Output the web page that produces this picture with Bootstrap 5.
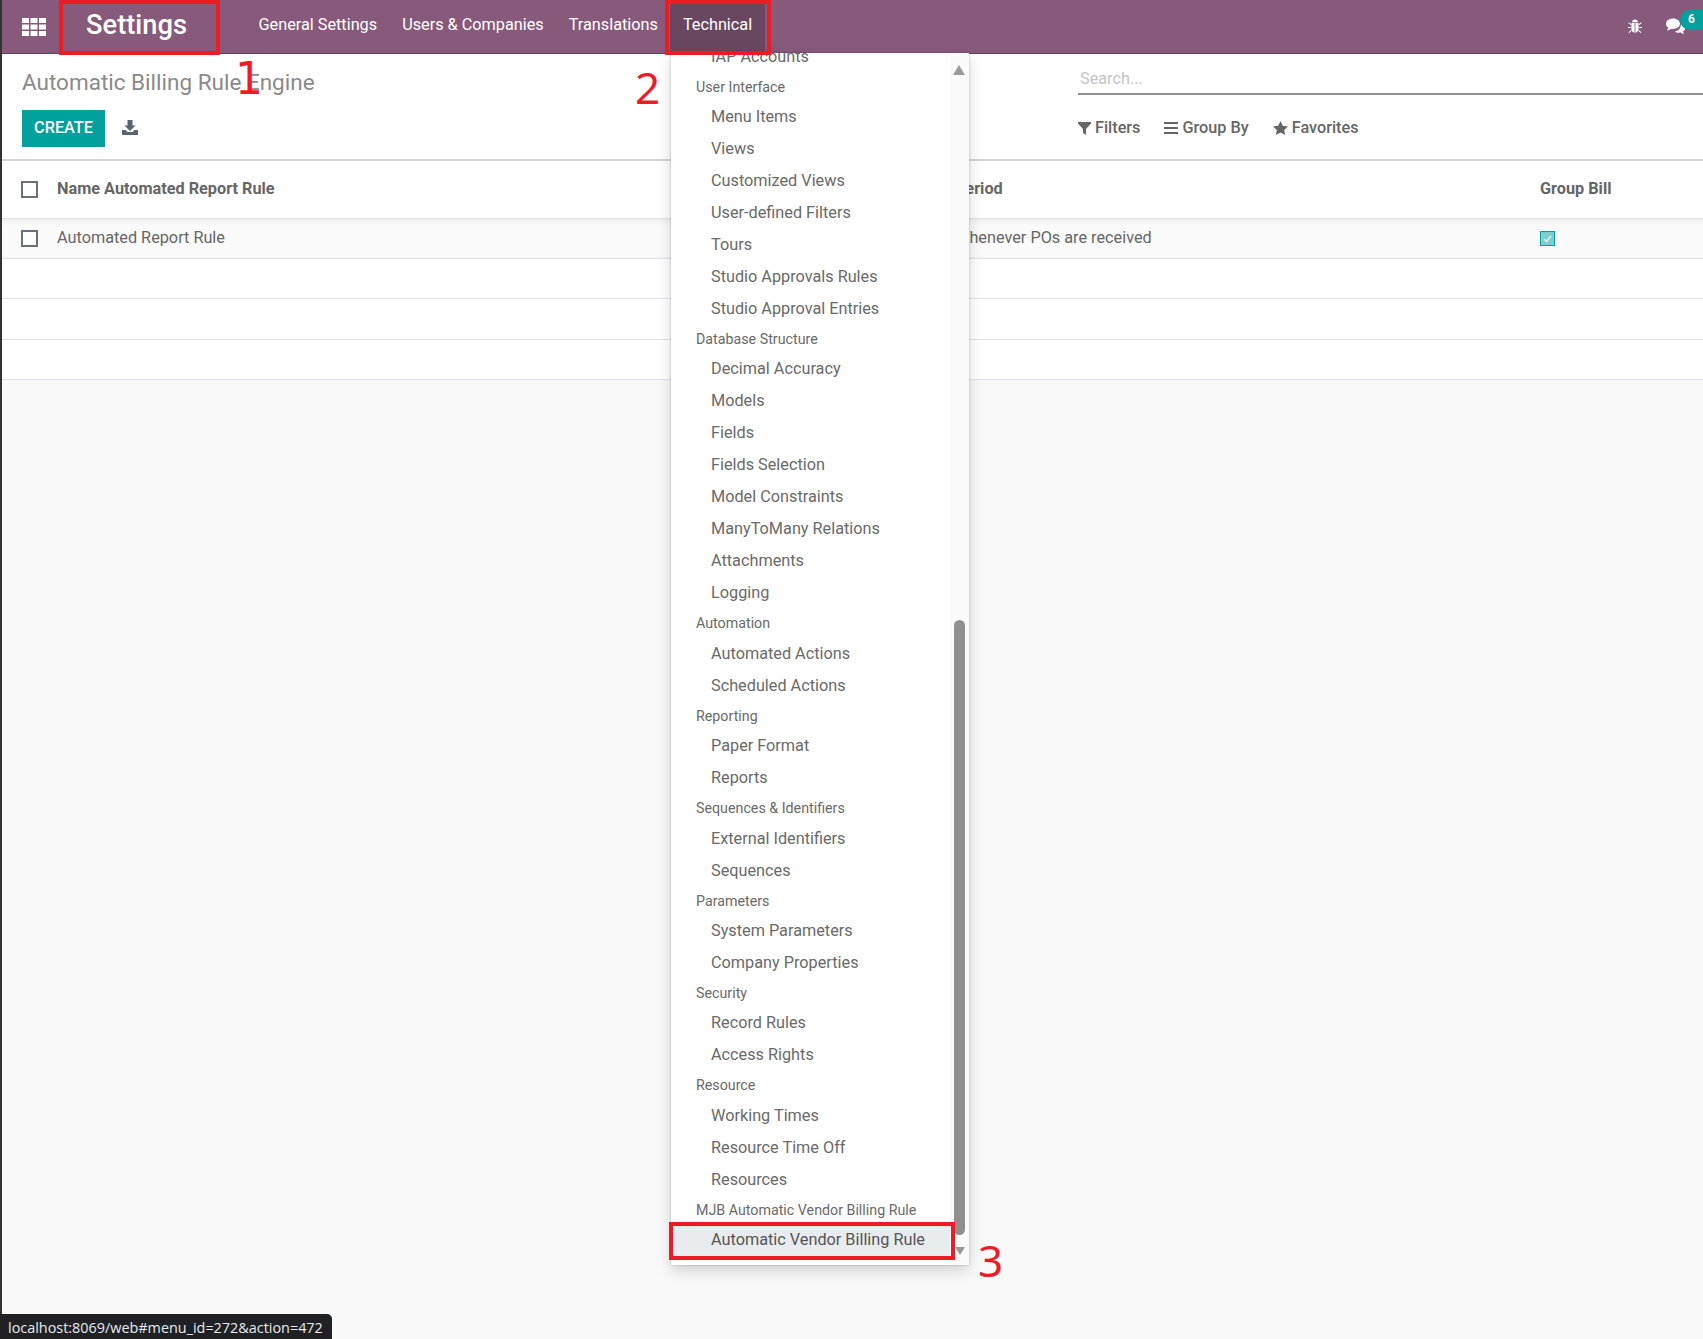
<!DOCTYPE html>
<html lang="en">
<head>
    <meta charset="UTF-8">
    <title>Automatic Billing Rule Engine - Odoo</title>
    <link href="https://cdn.jsdelivr.net/npm/bootstrap@5.3.0/dist/css/bootstrap.min.css" rel="stylesheet">
    <style>
        html, body { height: 100%; }
        body {
            background-color: #f9f9f9;
            font-family: Roboto, "Liberation Sans", sans-serif;
            font-size: 16.25px;
            color: #666;
            overflow: hidden;
        }
        .app-shell {
            position: relative;
            height: 1339px;
            border-left: 2px solid #333;
        }

        /* top bar */
        .top-bar {
            height: 54px;
            padding: 0;
            background-color: #875a7b;
            border-bottom: 1px solid #5f3f56;
        }
        .apps-btn { width: 57px; padding-left: 20px; line-height: 0; }
        .brand-name {
            width: 161px;
            margin: 0;
            padding: 0 0 2px 27px;
            font-size: 27.3px;
            font-weight: 500;
            color: #fff;
        }
        .menu-links { margin-left: 26px; }
        .menu-links .nav-link {
            height: 53px;
            padding: 0 12.5px;
            font-size: 16.25px;
            line-height: 49px;
            color: #fff;
        }
        .menu-links .nav-link.active { background-color: #6a4760; color: #fff; }
        .bug-icon { margin-right: 24px; line-height: 0; }
        .msg-icon { margin-right: 18px; line-height: 0; }
        .count-pill {
            position: absolute;
            top: 10px;
            right: 0;
            width: 23px;
            height: 20px;
            border-radius: 10px 0 0 10px;
            background-color: #00a09d;
            color: #fff;
            font-size: 12px;
            font-weight: 700;
            line-height: 19px;
            text-align: center;
        }

        /* control panel */
        .control-panel {
            height: 107px;
            background-color: #fff;
            border-bottom: 2px solid #d5d5d8;
        }
        .panel-left { width: 1076px; padding: 13px 0 0 20px; }
        .panel-right { flex: 1; padding-top: 0; }
        .page-title {
            margin: 0;
            height: 43px;
            font-size: 22.5px;
            font-weight: 400;
            line-height: 30px;
            color: #8a8a8a;
        }
        .create-btn {
            width: 83px;
            height: 37px;
            padding: 0;
            border: 0;
            border-radius: 0;
            background-color: #00a09d;
            color: #fff;
            font-size: 16.25px;
            font-weight: 500;
        }
        .export-icon { margin-left: 17px; margin-bottom: 2px; line-height: 0; }
        .search-field {
            height: 41px;
            margin-top: 0;
            padding: 12px 0 2px 2px;
            border: 0;
            border-bottom: 2px solid #909090;
            border-radius: 0;
            width: 100%;
            font-size: 16.25px;
            line-height: 22px;
            background: transparent;
            display: block;
            outline: 0;
        }
        .search-field::placeholder { color: #c4c4c4; }
        .filter-row { margin-top: 21px; gap: 24px; font-weight: 500; color: #666; }
        .filter-row span { display: inline-flex; align-items: center; gap: 4px; }

        /* list */
        .rule-list { table-layout: fixed; margin: 0; width: 1701px; background-color: #fff; color: #666; }
        .rule-list th, .rule-list td { padding: 0 10px; vertical-align: middle; }
        .rule-list thead th {
            height: 57px;
            font-weight: 700;
            border-bottom: 1px solid #e4e4e6;
        }
        .rule-list tbody td { height: 40.4px; border-bottom: 1px solid #e2e2e8; }
        .rule-list tbody tr:first-child td {
            background: linear-gradient(#eeeeee, #fbfbfb 7px);
        }
        .col-pick { width: 45px; }
        .col-name { width: 898px; }
        .col-period { width: 589px; }
        .col-group { width: 169px; }
        .rule-list .group-cell { padding-left: 6px; }
        .pick-box {
            display: block;
            width: 17px;
            height: 17px;
            margin-left: 9px;
            margin-right: 0;
            border: 2px solid #6b7178;
            background-color: #fff;
        }
        .on-box {
            display: block;
            width: 15px;
            height: 15px;
            border: 1px solid #00a09d;
            background-color: #7fcfce;
            line-height: 0;
        }

        /* technical dropdown */
        .tech-menu {
            position: absolute;
            top: 53px;
            left: 669px;
            display: block;
            width: 298px;
            height: 1212px;
            padding: 0 0 8px;
            overflow: hidden;
            border: 0;
            border-radius: 0;
            background-color: #fff;
            box-shadow: 0 0 2px rgba(0,0,0,.25), 0 6px 14px rgba(0,0,0,.16);
        }
        .tech-menu ul { list-style: none; margin: -12.4px 0 0; padding: 0; }
        .tech-menu .dropdown-item {
            height: 32px;
            padding: 0 0 0 40px;
            line-height: 32px;
            font-size: 16.25px;
            color: #6a6a6a;
        }
        .tech-menu .dropdown-item.active { background-color: #e9ecef; color: #555; }
        .tech-menu .dropdown-header {
            height: 28.4px;
            margin: 0;
            padding: 0 0 0 25px;
            line-height: 28.4px;
            font-size: 14.25px;
            font-weight: 400;
            color: #6a6a6a;
        }
        .scroll-rail {
            position: absolute;
            top: 0;
            right: 0;
            width: 19px;
            height: 100%;
            background-color: #fbfbfb;
        }
        .scroll-thumb {
            position: absolute;
            top: 567px;
            left: 4px;
            width: 11px;
            height: 615px;
            border-radius: 6px;
            background-color: #8f8f8f;
        }
        .scroll-up, .scroll-down {
            position: absolute;
            width: 0;
            height: 0;
        }
        .scroll-up {
            top: 12px;
            left: 3px;
            border-left: 6.5px solid transparent;
            border-right: 6.5px solid transparent;
            border-bottom: 10px solid #999;
        }
        .scroll-down {
            top: 1194px;
            left: 5px;
            border-left: 5.5px solid transparent;
            border-right: 5.5px solid transparent;
            border-top: 8px solid #999;
        }

        /* annotations */
        .mark-box { position: absolute; z-index: 1001; border: 4px solid #ed1c24; }
        .mark-settings { left: 57px; top: 0; width: 161px; height: 55px; }
        .mark-technical { left: 663px; top: 0; width: 106px; height: 55px; }
        .mark-vendor { left: 667px; top: 1222px; width: 286px; height: 38px; }
        .mark-num {
            position: absolute;
            z-index: 1001;
            color: #ed1c24;
            font-family: "Noto Sans", sans-serif;
            font-size: 44px;
            line-height: 44px;
        }
        .num-one { left: 233px; top: 57px; font-family: "DejaVu Sans", sans-serif; }
        .num-two { left: 633px; top: 65px; }
        .num-three { left: 976px; top: 1238px; }

        .status-tip {
            position: absolute;
            left: -2px;
            bottom: 0;
            width: 332px;
            height: 25px;
            padding-left: 8px;
            border-radius: 0 5px 0 0;
            background-color: #202124;
            color: #e8eaed;
            font-family: "Open Sans", sans-serif;
            font-size: 14.4px;
            line-height: 27px;
            white-space: nowrap;
        }
    </style>
</head>
<body>
<div class="app-shell">

    <nav class="navbar top-bar flex-nowrap justify-content-start">
        <a class="apps-btn" href="#">
            <svg width="24" height="18" viewBox="0 0 24 18" fill="#fff">
                <rect x="0" y="0" width="7" height="5"/><rect x="8.5" y="0" width="7" height="5"/><rect x="17" y="0" width="7" height="5"/>
                <rect x="0" y="6.5" width="7" height="5"/><rect x="8.5" y="6.5" width="7" height="5"/><rect x="17" y="6.5" width="7" height="5"/>
                <rect x="0" y="13" width="7" height="5"/><rect x="8.5" y="13" width="7" height="5"/><rect x="17" y="13" width="7" height="5"/>
            </svg>
        </a>
        <div class="brand-name">Settings</div>
        <ul class="nav menu-links flex-nowrap">
            <li class="nav-item"><a class="nav-link" href="#">General Settings</a></li>
            <li class="nav-item"><a class="nav-link" href="#">Users &amp; Companies</a></li>
            <li class="nav-item"><a class="nav-link" href="#">Translations</a></li>
            <li class="nav-item"><a class="nav-link active" href="#">Technical</a></li>
        </ul>
        <div class="ms-auto d-flex align-items-center">
            <span class="bug-icon">
                <svg width="14" height="15" viewBox="0 0 14 15" fill="#fff">
                    <path d="M4.2 3.2a2.8 2.8 0 0 1 5.6 0z"/>
                    <path d="M3.4 4h3.2v9.8C4.6 13.6 3.4 12 3.4 9.8zM7.4 4h3.2v5.8c0 2.2-1.2 3.8-3.2 4z"/>
                    <path d="M.9 3.2l2.4 2-.6.8-2.4-2zM13.1 3.2l-2.4 2 .6.8 2.4-2zM0 8h3v1H0zM11 8h3v1h-3zM3 11l.6.8-2.3 2.2-.7-.8zM11 11l-.6.8 2.3 2.2.7-.8z"/>
                </svg>
            </span>
            <span class="msg-icon">
                <svg width="19" height="17" viewBox="0 0 19 17" fill="#fff">
                    <path d="M7 .5c3.8 0 7 2.3 7 5.2s-3.2 5.2-7 5.2c-.7 0-1.400-.1-2-.2C3.900 11.600 2.500 12.300.8 12.500c.8-.8 1.400-1.700 1.500-2.900C.900 8.700 0 7.300 0 5.700 0 2.800 3.200.5 7 .5z"/>
                    <path d="M15 6c2.300.6 4 2.300 4 4.300 0 1.400-.8 2.600-2 3.400.1 1 .6 1.800 1.300 2.500-1.500-.2-2.700-.8-3.700-1.600-.5.1-1 .1-1.600.1-1.700 0-3.200-.5-4.300-1.300 3.800-.1 6.300-3.400 6.300-7.700z"/>
                </svg>
            </span>
            <span class="count-pill">6</span>
        </div>
    </nav>

    <div class="control-panel d-flex">
        <div class="panel-left">
            <h1 class="page-title">Automatic Billing Rule Engine</h1>
            <div class="d-flex align-items-center">
                <button type="button" class="btn create-btn">CREATE</button>
                <span class="export-icon">
                    <svg width="16" height="15" viewBox="0 0 16 15" fill="#5a6573">
                        <path d="M5.500 0h5v5.500h3L8 11 2.500 5.500h3z"/>
                        <path d="M0 10h3.500l2 2h5l2-2H16v5H0z"/>
                    </svg>
                </span>
            </div>
        </div>
        <div class="panel-right">
            <input class="search-field" type="text" placeholder="Search...">
            <div class="filter-row d-flex">
                <span><svg width="13" height="13" viewBox="0 0 13 13" fill="#666"><path d="M0 0h13v1.500L8 7v6L5 11V7L0 1.500z"/></svg>Filters</span>
                <span><svg width="14" height="12" viewBox="0 0 14 12" fill="#666"><rect width="14" height="2"/><rect y="5" width="14" height="2"/><rect y="10" width="14" height="2"/></svg>Group By</span>
                <span><svg width="15" height="14" viewBox="0 0 15 14" fill="#666"><path d="M7.500 0l2.300 4.700 5.200.7-3.800 3.600.9 5-4.600-2.400L2.900 14l.9-5L0 5.400l5.200-.7z"/></svg>Favorites</span>
            </div>
        </div>
    </div>

    <table class="table rule-list">
        <colgroup>
            <col class="col-pick"><col class="col-name"><col class="col-period"><col class="col-group">
        </colgroup>
        <thead>
            <tr>
                <th><span class="pick-box"></span></th>
                <th>Name Automated Report Rule</th>
                <th>Period</th>
                <th class="group-cell">Group Bill</th>
            </tr>
        </thead>
        <tbody>
            <tr>
                <td><span class="pick-box"></span></td>
                <td>Automated Report Rule</td>
                <td>Whenever POs are received</td>
                <td class="group-cell">
                    <span class="on-box">
                        <svg width="13" height="13" viewBox="0 0 13 13" fill="none" stroke="#d8f0ef" stroke-width="1.6"><path d="M3 7l2.500 2.500L10 4"/></svg>
                    </span>
                </td>
            </tr>
            <tr><td></td><td></td><td></td><td></td></tr>
            <tr><td></td><td></td><td></td><td></td></tr>
            <tr><td></td><td></td><td></td><td></td></tr>
        </tbody>
    </table>

    <!-- Technical menu, scrolled to the bottom -->
    <div class="dropdown-menu tech-menu">
        <ul>
            <li><a class="dropdown-item" href="#">IAP Accounts</a></li>
            <li><h6 class="dropdown-header">User Interface</h6></li>
            <li><a class="dropdown-item" href="#">Menu Items</a></li>
            <li><a class="dropdown-item" href="#">Views</a></li>
            <li><a class="dropdown-item" href="#">Customized Views</a></li>
            <li><a class="dropdown-item" href="#">User-defined Filters</a></li>
            <li><a class="dropdown-item" href="#">Tours</a></li>
            <li><a class="dropdown-item" href="#">Studio Approvals Rules</a></li>
            <li><a class="dropdown-item" href="#">Studio Approval Entries</a></li>
            <li><h6 class="dropdown-header">Database Structure</h6></li>
            <li><a class="dropdown-item" href="#">Decimal Accuracy</a></li>
            <li><a class="dropdown-item" href="#">Models</a></li>
            <li><a class="dropdown-item" href="#">Fields</a></li>
            <li><a class="dropdown-item" href="#">Fields Selection</a></li>
            <li><a class="dropdown-item" href="#">Model Constraints</a></li>
            <li><a class="dropdown-item" href="#">ManyToMany Relations</a></li>
            <li><a class="dropdown-item" href="#">Attachments</a></li>
            <li><a class="dropdown-item" href="#">Logging</a></li>
            <li><h6 class="dropdown-header">Automation</h6></li>
            <li><a class="dropdown-item" href="#">Automated Actions</a></li>
            <li><a class="dropdown-item" href="#">Scheduled Actions</a></li>
            <li><h6 class="dropdown-header">Reporting</h6></li>
            <li><a class="dropdown-item" href="#">Paper Format</a></li>
            <li><a class="dropdown-item" href="#">Reports</a></li>
            <li><h6 class="dropdown-header">Sequences &amp; Identifiers</h6></li>
            <li><a class="dropdown-item" href="#">External Identifiers</a></li>
            <li><a class="dropdown-item" href="#">Sequences</a></li>
            <li><h6 class="dropdown-header">Parameters</h6></li>
            <li><a class="dropdown-item" href="#">System Parameters</a></li>
            <li><a class="dropdown-item" href="#">Company Properties</a></li>
            <li><h6 class="dropdown-header">Security</h6></li>
            <li><a class="dropdown-item" href="#">Record Rules</a></li>
            <li><a class="dropdown-item" href="#">Access Rights</a></li>
            <li><h6 class="dropdown-header">Resource</h6></li>
            <li><a class="dropdown-item" href="#">Working Times</a></li>
            <li><a class="dropdown-item" href="#">Resource Time Off</a></li>
            <li><a class="dropdown-item" href="#">Resources</a></li>
            <li><h6 class="dropdown-header">MJB Automatic Vendor Billing Rule</h6></li>
            <li><a class="dropdown-item active" href="#">Automatic Vendor Billing Rule</a></li>
        </ul>
        <div class="scroll-rail">
            <span class="scroll-up"></span>
            <span class="scroll-thumb"></span>
            <span class="scroll-down"></span>
        </div>
    </div>

    <!-- Red annotations -->
    <div class="mark-box mark-settings"></div>
    <div class="mark-box mark-technical"></div>
    <div class="mark-box mark-vendor"></div>
    <div class="mark-num num-one">1</div>
    <div class="mark-num num-two">2</div>
    <div class="mark-num num-three">3</div>

    <div class="status-tip">localhost:8069/web#menu_id=272&amp;action=472</div>
</div>
<script src="https://cdn.jsdelivr.net/npm/bootstrap@5.3.0/dist/js/bootstrap.bundle.min.js"></script>
</body>
</html>
